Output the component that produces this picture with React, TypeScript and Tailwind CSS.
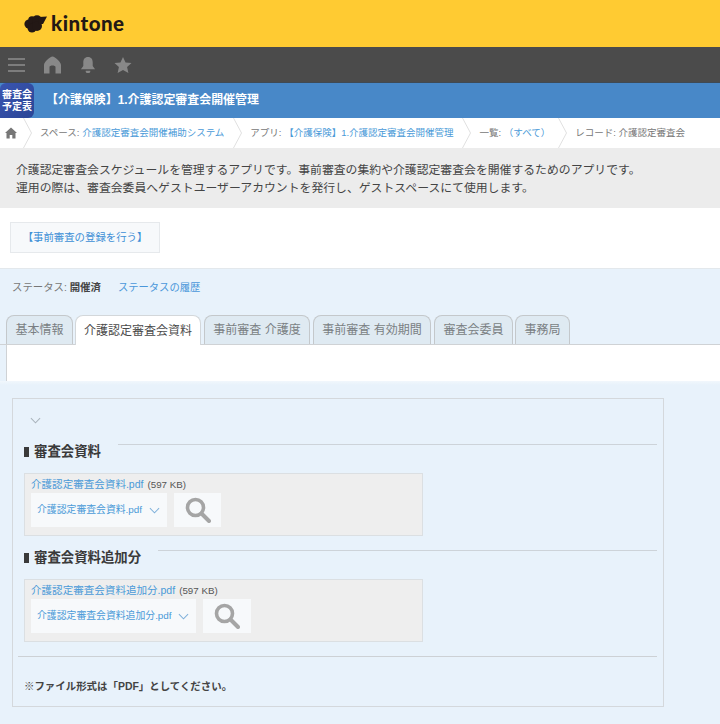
const FONT = "font-['Liberation_Sans','Noto_Sans_CJK_JP',sans-serif]";

function Chevron() {
  return (
    <svg width="10" height="30" viewBox="0 0 10 30" className="shrink-0">
      <path d="M0.5 0 L8.5 15 L0.5 30" fill="none" stroke="#e0e0e0" strokeWidth="1" />
    </svg>
  );
}

function Tab({ label, active, w }: { label: string; active?: boolean; w: string }) {
  return (
    <div
      className={
        active
          ? `${w} h-[30px] -mb-px z-10 flex items-center justify-center rounded-t-[8px] border border-b-0 border-[#d3d7da] bg-white text-[12px] text-[#4a4a4a]`
          : `${w} h-[29px] flex items-center justify-center rounded-t-[8px] border border-b-0 border-[#c4c8cb] bg-[#dfeaf2] text-[12px] text-[#7a7f83]`
      }
    >
      {label}
    </div>
  );
}

function Magnifier() {
  return (
    <svg width="26" height="26" viewBox="0 0 26 26">
      <circle cx="10.5" cy="10.5" r="8" fill="none" stroke="#a5a5a5" strokeWidth="3.6" />
      <path d="M16.5 16.5 L24 24" stroke="#a5a5a5" strokeWidth="4" strokeLinecap="round" />
    </svg>
  );
}

function SmallChevron({ color, w = 12 }: { color: string; w?: number }) {
  return (
    <svg width={w} height="7" viewBox="0 0 12 7">
      <path d="M1 1 L6 6 L11 1" fill="none" stroke={color} strokeWidth="1.1" />
    </svg>
  );
}

function Section({
  title,
  file,
  titleW,
  selectW,
  searchW,
}: {
  title: string;
  file: string;
  titleW: string;
  selectW: string;
  searchW: string;
}) {
  return (
    <div className="flex flex-col">
      <div className="flex items-start">
        <div className={`${titleW} h-[16px] flex items-center pl-[11px] text-[13.4px] font-bold text-[#3a3a3a]`}>
          <span className="mr-[5px] h-[10px] w-[5px] shrink-0 bg-[#3a3a3a]" />
          <span className="whitespace-nowrap">{title}</span>
        </div>
        <div className="mr-[6px] flex-1 border-t border-[#cdd3d9]" />
      </div>
      <div className="ml-[11px] mt-[13px] h-[63px] w-[399px] border border-[#dbdfe2] bg-[#eeeeee] pl-[6px] pt-[2px]">
        <div className="h-[17px] text-[10.55px] leading-[17px]">
          <span className="text-[#4a9ad8]">{file}</span>
          <span className="ml-[4px] text-[9.75px] text-[#555555]">(597 KB)</span>
        </div>
        <div className="flex gap-[7px]">
          <div className={`${selectW} h-[34px] flex items-center justify-between bg-[#f7f9fb] pl-[6px] pr-[7px] text-[9.85px] text-[#4a9ad8]`}>
            <span>{file}</span>
            <SmallChevron color="#7fb0da" w={11} />
          </div>
          <div className={`${searchW} h-[34px] flex items-center justify-center bg-[#f7f9fb]`}>
            <Magnifier />
          </div>
        </div>
      </div>
    </div>
  );
}

export default function App() {
  return (
    <div className={`${FONT} h-[724px] w-[720px] overflow-hidden bg-[#e8f2fb]`}>
      {/* kintone header */}
      <div className="flex h-[47px] items-center bg-[#ffcb32] pl-[24px]">
        <svg width="23" height="18" viewBox="0 0 23 18">
          <g fill="#231815">
            <circle cx="5" cy="9" r="4.6" />
            <circle cx="8" cy="5" r="3.8" />
            <circle cx="13" cy="5.2" r="5" />
            <circle cx="8" cy="13.2" r="4.4" />
            <circle cx="13" cy="11" r="5" />
            <path d="M15 2 L23 1.5 L19 9 L14 9 Z" />
          </g>
        </svg>
        <span className="ml-[4px] font-['Lato',sans-serif] text-[20.5px] font-black leading-none tracking-[0.5px] text-[#231815]">
          kintone
        </span>
      </div>

      {/* nav bar */}
      <div className="flex h-[36px] items-center border-b border-[#3f4a55] bg-[#4b4b4b] pl-[8px]">
        <svg width="17" height="16" viewBox="0 0 17 16">
          <path d="M0 2h17M0 8h17M0 14h17" stroke="#7d7d7d" strokeWidth="2" />
        </svg>
        <svg width="17" height="18" viewBox="0 0 17 18" className="ml-[19px]">
          <path d="M8.5 0.5 C11 0.5 17 6 17 9 V17.5 H11.5 V11 C11.5 9 5.5 9 5.5 11 V17.5 H0 V9 C0 6 6 0.5 8.5 0.5 Z" fill="#888888" />
        </svg>
        <svg width="16" height="18" viewBox="0 0 17 18" className="ml-[19px]">
          <path d="M8.5 0.5 C12 0.5 13.5 3 13.5 6 V10 L16 13.5 H1 L3.5 10 V6 C3.5 3 5 0.5 8.5 0.5 Z M6 15 H11 C11 17 10 17.5 8.5 17.5 C7 17.5 6 17 6 15 Z" fill="#888888" />
        </svg>
        <svg width="18" height="18" viewBox="0 0 19 18" className="ml-[18px]">
          <path d="M9.5 0.5 L12.2 6.3 L18.5 7 L13.8 11.2 L15.2 17.5 L9.5 14.2 L3.8 17.5 L5.2 11.2 L0.5 7 L6.8 6.3 Z" fill="#888888" />
        </svg>
      </div>

      {/* app title */}
      <div className="flex h-[35px] items-center bg-[#4888c8]">
        <div className="flex h-[35px] w-[34px] flex-col items-center justify-center rounded-[6px] rounded-bl-none bg-gradient-to-br from-[#3a55b0] to-[#2a4596] text-[10px] font-bold leading-[12px] text-white">
          <span>審査会</span>
          <span>予定表</span>
        </div>
        <span className="ml-[12px] text-[11.95px] font-bold text-white">【介護保険】1.介護認定審査会開催管理</span>
      </div>

      {/* breadcrumb */}
      <div className="flex h-[30px] items-center bg-white text-[9.5px] text-[#777777]">
        <svg width="12" height="12" viewBox="0 0 12 12" className="ml-[5px] mr-[6px]">
          <path d="M6 0.5 L12 6 H10.5 V11.5 H7.3 V8 H4.7 V11.5 H1.5 V6 H0 Z" fill="#777777" />
        </svg>
        <Chevron />
        <span className="ml-[7px] mr-[9px]">
          スペース: <span className="text-[#4a9ad8]">介護認定審査会開催補助システム</span>
        </span>
        <Chevron />
        <span className="ml-[7px] mr-[8px]">
          アプリ: <span className="text-[#4a9ad8]">【介護保険】1.介護認定審査会開催管理</span>
        </span>
        <Chevron />
        <span className="ml-[8px] mr-[8px]">
          一覧: <span className="text-[#4a9ad8]">（すべて）</span>
        </span>
        <Chevron />
        <span className="ml-[7px]">レコード: 介護認定審査会</span>
      </div>

      {/* description */}
      <div className="flex h-[60px] flex-col justify-center bg-[#ececec] pl-[16px] pt-[2px] text-[11.85px] leading-[18px] text-[#444444]">
        <div>介護認定審査会スケジュールを管理するアプリです。事前審査の集約や介護認定審査会を開催するためのアプリです。</div>
        <div>運用の際は、審査会委員へゲストユーザーアカウントを発行し、ゲストスペースにて使用します。</div>
      </div>

      {/* custom button area */}
      <div className="flex h-[61px] items-center border-b border-[#e3e8ec] bg-white pl-[10px] pb-[1px]">
        <div className="flex h-[31px] w-[150px] items-center justify-center border border-[#e6e9ec] bg-[#f7f9fb] text-[10.4px] text-[#3d8fd6]">
          【事前審査の登録を行う】
        </div>
      </div>

      {/* status */}
      <div className="flex h-[38px] items-center pl-[12px] text-[10.4px] text-[#777777]">
        <span>
          ステータス: <span className="font-bold text-[#444444]">開催済</span>
        </span>
        <span className="ml-[17px] text-[10.3px] text-[#4a97da]">ステータスの履歴</span>
      </div>

      {/* tabs */}
      <div className="mt-[9px] flex h-[29px] items-end border-b border-[#cfd2d5] pl-[6px]">
        <Tab label="基本情報" w="w-[67px]" />
        <div className="w-[2px]" />
        <Tab label="介護認定審査会資料" active w="w-[126px]" />
        <div className="w-[3px]" />
        <Tab label="事前審査 介護度" w="w-[106px]" />
        <div className="w-[3px]" />
        <Tab label="事前審査 有効期間" w="w-[118px]" />
        <div className="w-[3px]" />
        <Tab label="審査会委員" w="w-[79px]" />
        <div className="w-[2px]" />
        <Tab label="事務局" w="w-[55px]" />
      </div>
      <div className="ml-[6px] h-[36px] border-l border-[#cfd2d5] bg-white" />
      <div className="h-[4px] bg-gradient-to-b from-[#f1f7fc] to-[#e8f2fb]" />

      {/* form box */}
      <div className="ml-[12px] mt-[13px] h-[309px] w-[652px] border border-[#d4d8dc]">
        <div className="flex h-[45px] items-center pl-[17px] pb-[2px]">
          <SmallChevron color="#a9b3bb" w={11} />
        </div>
        <div className="flex flex-col">
          <Section title="審査会資料" file="介護認定審査会資料.pdf" titleW="w-[105px]" selectW="w-[136px]" searchW="w-[47px]" />
          <div className="h-[14px]" />
          <Section title="審査会資料追加分" file="介護認定審査会資料追加分.pdf" titleW="w-[145px]" selectW="w-[165px]" searchW="w-[48px]" />
        </div>
        <div className="ml-[5px] mr-[6px] mt-[14px] border-t border-[#cdd1d5]" />
        <div className="mt-[22px] pl-[11px] text-[10.45px] font-bold text-[#444444]">※ファイル形式は「PDF」としてください。</div>
      </div>
    </div>
  );
}
